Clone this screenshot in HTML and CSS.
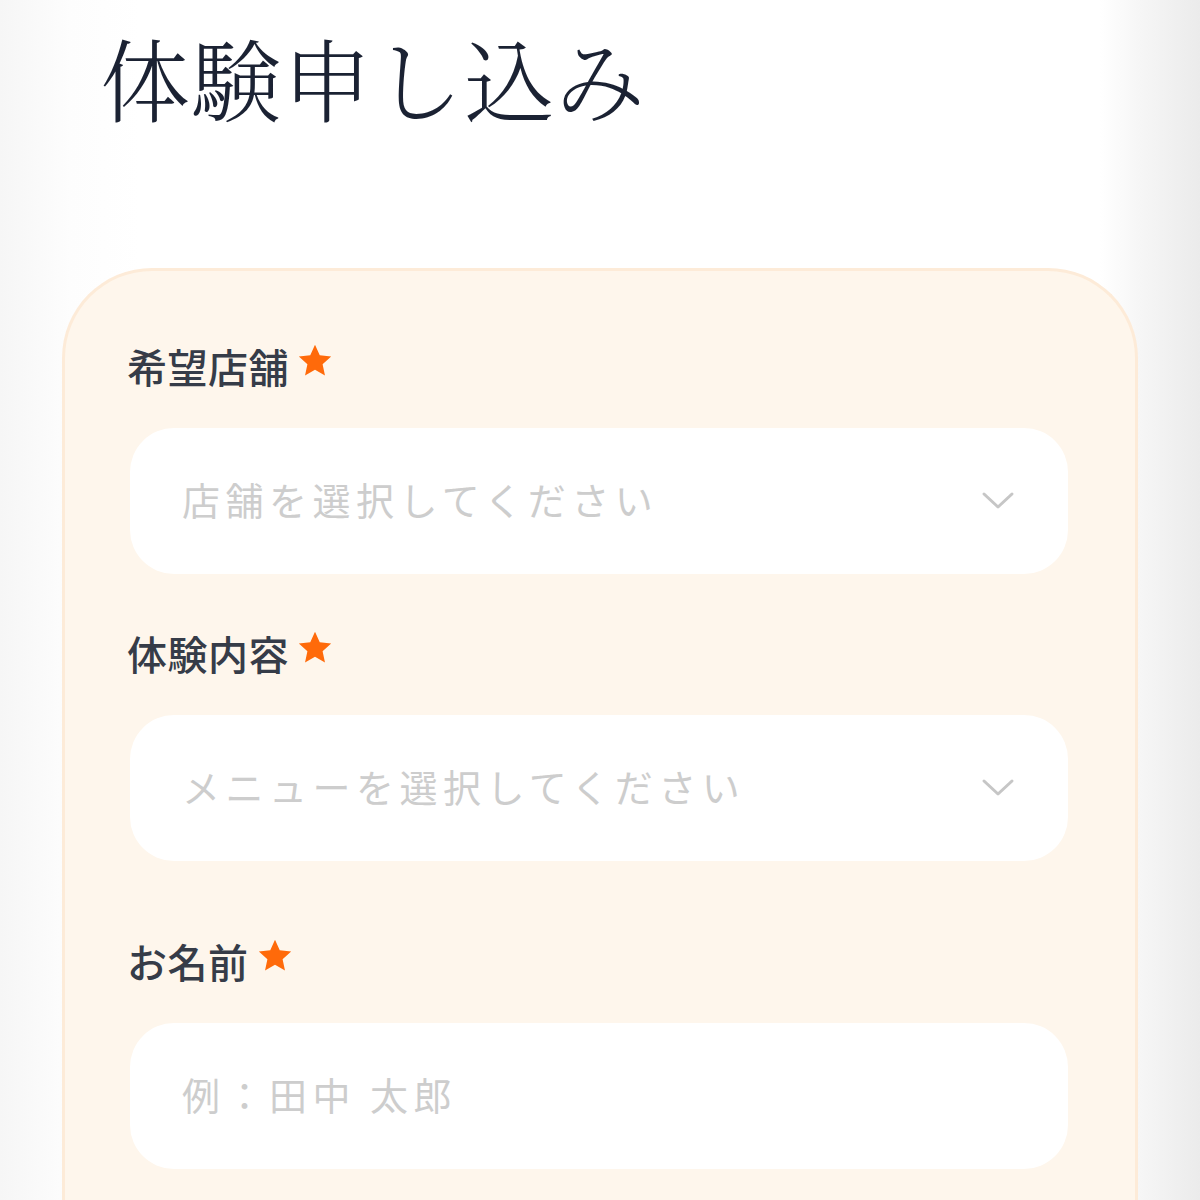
FILE: index.html
```html
<!DOCTYPE html>
<html lang="ja">
<head>
<meta charset="utf-8">
<title>体験申し込み</title>
<link rel="stylesheet" href="styles.css">
</head>
<body>
<main class="page">
  <h1 class="title">体験申し込み</h1>
  <form class="card">
    <div class="field">
      <label class="label" for="shop">希望店舗<svg class="star" viewBox="0 0 24 24" aria-hidden="true"><path d="M12 1.8l3 6.6 7.2.8-5.4 4.9 1.5 7.1L12 17.6l-6.3 3.6 1.5-7.1L1.8 9.2 9 8.4z"/></svg></label>
      <div class="control-wrap">
        <select id="shop" class="control"><option selected disabled>店舗を選択してください</option></select>
        <svg class="chevron" viewBox="0 0 34 20" aria-hidden="true"><path d="M3 3l14 13L31 3"/></svg>
      </div>
    </div>
    <div class="field">
      <label class="label" for="menu">体験内容<svg class="star" viewBox="0 0 24 24" aria-hidden="true"><path d="M12 1.8l3 6.6 7.2.8-5.4 4.9 1.5 7.1L12 17.6l-6.3 3.6 1.5-7.1L1.8 9.2 9 8.4z"/></svg></label>
      <div class="control-wrap">
        <select id="menu" class="control"><option selected disabled>メニューを選択してください</option></select>
        <svg class="chevron" viewBox="0 0 34 20" aria-hidden="true"><path d="M3 3l14 13L31 3"/></svg>
      </div>
    </div>
    <div class="field field--spaced">
      <label class="label" for="name">お名前<svg class="star" viewBox="0 0 24 24" aria-hidden="true"><path d="M12 1.8l3 6.6 7.2.8-5.4 4.9 1.5 7.1L12 17.6l-6.3 3.6 1.5-7.1L1.8 9.2 9 8.4z"/></svg></label>
      <div class="control-wrap">
        <input id="name" class="control" type="text" placeholder="例：田中 太郎">
      </div>
    </div>
  </form>
</main>
</body>
</html>
```
FILE: styles.css
```css
* { box-sizing: border-box; }
html, body { margin: 0; padding: 0; }
body {
  width: 1200px;
  height: 1200px;
  overflow: hidden;
  font-family: "Noto Sans CJK JP", "Noto Sans", sans-serif;
  background: linear-gradient(to right, #f6f6f6 0px, #fdfdfd 70px, #ffffff 140px, #ffffff 1100px, #f6f6f6 1140px, #ebebeb 1200px);
}
.page {
  display: flex;
  flex-direction: column;
}
.title {
  margin: 31px 0 0 100px;
  font-family: "Noto Serif CJK JP", "Noto Sans CJK JP", serif;
  font-size: 90px;
  font-weight: 300;
  line-height: 1;
  color: #1b2233;
  letter-spacing: 1px;
}
.card {
  margin: 147px 0 0 62px;
  width: 1076px;
  height: 932px;
  background: #fef6ec;
  border: 3px solid #fdebd8;
  border-bottom: none;
  border-radius: 90px 90px 0 0;
  padding: 75px 67px 0 65px;
  display: flex;
  flex-direction: column;
  gap: 59px;
}
.field {
  display: flex;
  flex-direction: column;
  gap: 42px;
}
.field--spaced { margin-top: 21px; }
.label {
  display: flex;
  align-items: center;
  gap: 7px;
  margin-left: -3px;
  font-size: 40px;
  line-height: 40px;
  height: 40px;
  font-weight: 500;
  color: #363c48;
  letter-spacing: 0.5px;
}
.star {
  width: 38px;
  height: 38px;
  fill: #ff6a0a;
  margin-top: -10px;
}
.control-wrap {
  position: relative;
  width: 938px;
}
.control {
  display: block;
  width: 100%;
  height: 146px;
  border: none;
  outline: none;
  border-radius: 44px;
  background: #ffffff;
  padding: 0 90px 6px 52px;
  font-family: "Noto Sans CJK JP", "Noto Sans", sans-serif;
  font-size: 38px;
  letter-spacing: 5.5px;
  color: #cdcdcd;
  appearance: none;
  -webkit-appearance: none;
}
.control::placeholder { color: #cdcdcd; opacity: 1; }
.chevron {
  position: absolute;
  right: 53px;
  top: 63px;
  width: 34px;
  height: 20px;
  fill: none;
  stroke: #c6c6c6;
  stroke-width: 3;
  stroke-linecap: round;
  stroke-linejoin: round;
  pointer-events: none;
}
```
